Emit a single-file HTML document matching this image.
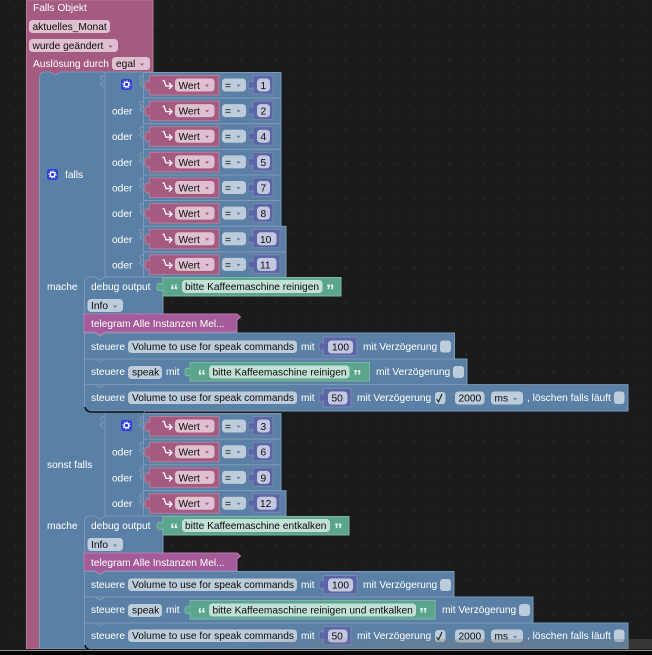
<!DOCTYPE html>
<html><head><meta charset="utf-8"><style>
html,body{margin:0;padding:0;background:#1b1b1b;width:652px;height:655px;overflow:hidden}
svg{display:block;filter:blur(.3px)}
text{font-family:"Liberation Sans",sans-serif;font-size:10.2px;fill:#fff}
.d{fill:#0c0c0c}
.q{font-weight:bold;font-size:17px;fill:#e4f3ee}
.fb{fill:#bdccdb}.fp{fill:#dfc0d0}.fu{fill:#c3c7e0}.fg{fill:#c3e0d6}
.e{fill:none;stroke:#7c99b7;stroke-width:1}
</style></head><body>
<svg width="652" height="655" viewBox="0 0 652 655" xmlns="http://www.w3.org/2000/svg">
<defs>
<linearGradient id="band" x1="0" x2="1" y1="0" y2="0"><stop offset=".3" stop-color="#777" stop-opacity="0"/><stop offset=".7" stop-color="#777" stop-opacity=".3"/></linearGradient>
<pattern id="dots" width="17.35" height="17.35" patternUnits="userSpaceOnUse"><rect x="15" y="7" width="1.2" height="1.2" fill="#3a3a3a"/></pattern>
<g id="gear"><rect width="11" height="11" rx="2.5" fill="#2f3fdc"/><circle cx="5.5" cy="5.5" r="2.4" fill="none" stroke="#fff" stroke-width="1.5"/><circle cx="5.5" cy="5.5" r="3.7" fill="none" stroke="#dfe3ff" stroke-width=".9" stroke-dasharray="1.2 1.7"/></g>
<g id="w">
<path d="M149.500 3.500H219V23H149.500V17.500C146 19.500 145 17.500 145 13.500S146 7.500 149.500 9.500Z" fill="#a55b80" stroke="#b77c99" stroke-width="1"/>
<path d="M162.500 8.500h1.500l2 5.500h6M169 11l3 3-3 3" fill="none" stroke="#fff" stroke-width="1.300"/>
<rect x="175" y="6.500" width="39.500" height="13" rx="3.500" class="fp"/><path d="M205 12.500h4l-2 2.500z" fill="#a55b80"/>
<rect x="222" y="6.500" width="24" height="13" rx="3.500" class="fb"/><path d="M236.500 12.500h4l-2 2.500z" fill="#5b80a5"/>
</g>
<g id="n1"><rect x="143.500" y=".5" width="137.500" height="25.600" fill="#5b80a5" stroke="#7c99b7"/><path d="M144 4C139 3 139 6 141 8S141 12 139.500 11 143 16 144 15" fill="none" stroke="#7c99b7"/>
<use href="#w"/>
<path d="M253 3.500H273V22H253V16C249 18 248 16 248 13S249 8 253 10Z" fill="#5b67a5" stroke="#7c85b7"/><rect x="257" y="6.500" width="13" height="13" rx="3.500" class="fu"/></g>
<g id="n2"><rect x="143.500" y=".5" width="142.500" height="25.600" fill="#5b80a5" stroke="#7c99b7"/><path d="M144 4C139 3 139 6 141 8S141 12 139.500 11 143 16 144 15" fill="none" stroke="#7c99b7"/>
<use href="#w"/>
<path d="M253 3.500H280V22H253V16C249 18 248 16 248 13S249 8 253 10Z" fill="#5b67a5" stroke="#7c85b7"/><rect x="257" y="6.500" width="19.500" height="13" rx="3.500" class="fu"/></g>
</defs>
<rect width="652" height="655" fill="#1b1b1b"/>
<rect width="652" height="655" fill="url(#dots)"/>

<!-- outer pink block -->
<path d="M26.500 0H153V72H70V76H39.500V649H26.500Z" fill="#a55b80" stroke="#b77c99"/>
<text x="33" y="11">Falls Objekt</text>
<rect x="29" y="20" width="81" height="13" rx="3.500" class="fp"/><text x="32.500" y="30" class="d">aktuelles_Monat</text>
<rect x="29" y="39" width="89" height="13" rx="3.500" class="fp"/><text x="32.500" y="49" class="d">wurde geändert</text><path d="M108.500 45.500h4l-2 2.500z" fill="#a55b80"/>
<text x="33" y="67">Auslösung durch</text>
<rect x="112" y="57" width="38" height="13" rx="3.500" class="fp"/><text x="116" y="67" class="d">egal</text><path d="M140 63.500h4l-2 2.500z" fill="#a55b80"/>
<rect x="27" y="60" width="0" height="0"/>

<!-- main blue body -->
<path d="M39.500 78Q39.500 72 45 72H50L55 75 60 72H144V516H105V649H39.500Z" fill="#5b80a5" stroke="#7c99b7"/>
<path d="M105 72V277M105 413V516" class="e"/>
<path d="M105 76C100 75 100 78 102 80S102 84 100 83 104 88 105 87" class="e"/>
<path d="M105 417C100 416 100 419 102 421S102 425 100 424 104 429 105 428" class="e"/>
<use href="#gear" x="47" y="169"/><text x="65" y="178">falls</text>
<text x="47" y="290">mache</text>
<text x="47" y="468">sonst falls</text>
<text x="47" y="529">mache</text>

<!-- section 1 rows -->
<g transform="translate(0,72)"><use href="#n1"/><use href="#gear" x="121" y="7"/><text x="178.500" y="17" class="d">Wert</text><text x="225" y="17" class="d">=</text><text x="260.500" y="17" class="d">1</text></g>
<g transform="translate(0,97.600)"><use href="#n1"/><text x="112" y="17">oder</text><text x="178.500" y="17" class="d">Wert</text><text x="225" y="17" class="d">=</text><text x="260.500" y="17" class="d">2</text></g>
<g transform="translate(0,123.200)"><use href="#n1"/><text x="112" y="17">oder</text><text x="178.500" y="17" class="d">Wert</text><text x="225" y="17" class="d">=</text><text x="260.500" y="17" class="d">4</text></g>
<g transform="translate(0,148.900)"><use href="#n1"/><text x="112" y="17">oder</text><text x="178.500" y="17" class="d">Wert</text><text x="225" y="17" class="d">=</text><text x="260.500" y="17" class="d">5</text></g>
<g transform="translate(0,174.500)"><use href="#n1"/><text x="112" y="17">oder</text><text x="178.500" y="17" class="d">Wert</text><text x="225" y="17" class="d">=</text><text x="260.500" y="17" class="d">7</text></g>
<g transform="translate(0,200.100)"><use href="#n1"/><text x="112" y="17">oder</text><text x="178.500" y="17" class="d">Wert</text><text x="225" y="17" class="d">=</text><text x="260.500" y="17" class="d">8</text></g>
<g transform="translate(0,225.800)"><use href="#n2"/><text x="112" y="17">oder</text><text x="178.500" y="17" class="d">Wert</text><text x="225" y="17" class="d">=</text><text x="260" y="17" class="d">10</text></g>
<g transform="translate(0,251.400)"><use href="#n2"/><text x="112" y="17">oder</text><text x="178.500" y="17" class="d">Wert</text><text x="225" y="17" class="d">=</text><text x="260" y="17" class="d">11</text></g>

<!-- mache 1 -->
<path d="M84.500 283Q84.500 277 90 277H95L100 280 105 277H163V314H84.500Z" fill="#5b80a5" stroke="#7c99b7"/>
<text x="91" y="290">debug output</text>
<path d="M163 277.500H341V296H163V290C158 292 157 290 157 287S158 282 163 284Z" fill="#5ba58c" stroke="#7cb7a3"/>
<text x="170" y="296" class="q">“</text><rect x="182" y="280" width="140.500" height="13" rx="3.500" class="fg"/><text x="185" y="290" class="d">bitte Kaffeemaschine reinigen</text><text x="326" y="296" class="q">”</text>
<rect x="87.500" y="299" width="35.500" height="13" rx="3.500" class="fb"/><text x="91" y="309" class="d">Info</text><path d="M113 305.500h4l-2 2.500z" fill="#5b80a5"/>
<path d="M84 314H237L240.500 317 237 320V332H105L100 335 95 332H84Z" fill="#a55b99" stroke="#b77cae"/>
<text x="91" y="327">telegram Alle Instanzen Mel...</text>

<g>
<path d="M84.500 333H95L100 336 105 333H454.500V359H84.500Z" fill="#5b80a5" stroke="#7c99b7"/>
<text x="91" y="350">steuere</text><rect x="128" y="340.500" width="169" height="12.500" rx="3.500" class="fb"/><text x="132" y="350" class="d">Volume to use for speak commands</text><text x="301" y="350">mit</text>
<path d="M323.500 337H357V355.500H323.500V350C319.500 352 319 350 319 346.500S319.500 341 323.500 343Z" fill="#5b67a5" stroke="#7c85b7"/><rect x="328" y="340.500" width="25" height="13" rx="3.500" class="fu"/><text x="332" y="350.500" class="d">100</text>
<text x="363" y="350">mit Verzögerung</text><rect x="440" y="340.500" width="11" height="12" rx="3" class="fb"/>
</g>
<g>
<path d="M84.500 359H95L100 362 105 359H467V384.600H84.500Z" fill="#5b80a5" stroke="#7c99b7"/>
<text x="91" y="375">steuere</text><rect x="128" y="366" width="34" height="13" rx="3.500" class="fb"/><text x="132" y="375.500" class="d">speak</text><text x="166" y="375">mit</text>
<path d="M190 362.500H369.500V381H190V375C186 377 185 375 185 372S186 367 190 369Z" fill="#5ba58c" stroke="#7cb7a3"/>
<text x="197.500" y="381.500" class="q">“</text><rect x="209" y="365.500" width="140.500" height="13" rx="3.500" class="fg"/><text x="212.500" y="375.500" class="d">bitte Kaffeemaschine reinigen</text><text x="353" y="381.500" class="q">”</text>
<text x="376" y="375">mit Verzögerung</text><rect x="453" y="366" width="11" height="12" rx="3" class="fb"/>
</g>
<g>
<path d="M84.500 384.600H95L100 387.600 105 384.600H628V411H90Q84.500 411 84.500 405Z" fill="#5b80a5" stroke="#7c99b7"/>
<path d="M85 407Q86 412 92 412H144" stroke="#0c0c0c" stroke-width="1.500" fill="none"/>
<text x="91" y="401">steuere</text><rect x="128" y="391.500" width="169" height="12.500" rx="3.500" class="fb"/><text x="132" y="401" class="d">Volume to use for speak commands</text><text x="301" y="401">mit</text>
<path d="M323.500 388.500H351V407H323.500V401C319.500 403 319 401 319 398S319.500 392 323.500 394Z" fill="#5b67a5" stroke="#7c85b7"/><rect x="328" y="391.500" width="19.500" height="13" rx="3.500" class="fu"/><text x="331.500" y="401.500" class="d">50</text>
<text x="357" y="401">mit Verzögerung</text><rect x="435" y="392" width="10.500" height="12" rx="3" class="fb"/><path d="M436.500 399l2 3 3.500-8" fill="none" stroke="#111" stroke-width="1"/>
<rect x="455" y="391.500" width="29.500" height="13" rx="3.500" class="fb"/><text x="458.500" y="401.500" class="d">2000</text>
<rect x="491" y="391.500" width="32" height="13" rx="3.500" class="fb"/><text x="494.500" y="401.500" class="d">ms</text><path d="M513 398h4l-2 2.500z" fill="#5b80a5"/>
<text x="527" y="401">, löschen falls läuft</text><rect x="614" y="391.500" width="10.500" height="12.500" rx="3" class="fb"/>
</g>

<!-- section 2 rows -->
<g transform="translate(0,413)"><use href="#n1"/><use href="#gear" x="121" y="7"/><text x="178.500" y="17" class="d">Wert</text><text x="225" y="17" class="d">=</text><text x="260.500" y="17" class="d">3</text></g>
<g transform="translate(0,438.700)"><use href="#n1"/><text x="112" y="17">oder</text><text x="178.500" y="17" class="d">Wert</text><text x="225" y="17" class="d">=</text><text x="260.500" y="17" class="d">6</text></g>
<g transform="translate(0,464.400)"><use href="#n1"/><text x="112" y="17">oder</text><text x="178.500" y="17" class="d">Wert</text><text x="225" y="17" class="d">=</text><text x="260.500" y="17" class="d">9</text></g>
<g transform="translate(0,490.200)"><use href="#n2"/><text x="112" y="17">oder</text><text x="178.500" y="17" class="d">Wert</text><text x="225" y="17" class="d">=</text><text x="260" y="17" class="d">12</text></g>

<!-- mache 2 -->
<path d="M84.500 522Q84.500 516 90 516H95L100 519 105 516H163V553H84.500Z" fill="#5b80a5" stroke="#7c99b7"/>
<text x="91" y="529">debug output</text>
<path d="M163 516.500H349V535H163V529C158 531 157 529 157 526S158 521 163 523Z" fill="#5ba58c" stroke="#7cb7a3"/>
<text x="170" y="535" class="q">“</text><rect x="182" y="519" width="148" height="13" rx="3.500" class="fg"/><text x="185" y="529" class="d">bitte Kaffeemaschine entkalken</text><text x="334" y="535" class="q">”</text>
<rect x="87.500" y="538" width="35.500" height="13" rx="3.500" class="fb"/><text x="91" y="548" class="d">Info</text><path d="M113 544.500h4l-2 2.500z" fill="#5b80a5"/>
<path d="M84 553H237L240.500 556 237 559V571H105L100 574 95 571H84Z" fill="#a55b99" stroke="#b77cae"/>
<text x="91" y="566">telegram Alle Instanzen Mel...</text>

<g>
<path d="M84.500 571.500H95L100 574.500 105 571.500H454V597H84.500Z" fill="#5b80a5" stroke="#7c99b7"/>
<text x="91" y="588">steuere</text><rect x="128" y="578.500" width="169" height="12.500" rx="3.500" class="fb"/><text x="132" y="588" class="d">Volume to use for speak commands</text><text x="301" y="588">mit</text>
<path d="M323.500 575.500H357V594H323.500V588C319.500 590 319 588 319 585S319.500 579 323.500 581Z" fill="#5b67a5" stroke="#7c85b7"/><rect x="328" y="578.500" width="25" height="13" rx="3.500" class="fu"/><text x="332" y="588.500" class="d">100</text>
<text x="363" y="588">mit Verzögerung</text><rect x="440" y="579" width="11" height="12" rx="3" class="fb"/>
</g>
<g>
<path d="M84.500 597H95L100 600 105 597H533V623H84.500Z" fill="#5b80a5" stroke="#7c99b7"/>
<text x="91" y="613">steuere</text><rect x="128" y="604" width="34" height="13" rx="3.500" class="fb"/><text x="132" y="613.500" class="d">speak</text><text x="166" y="613">mit</text>
<path d="M190 600.500H435V619H190V613C186 615 185 613 185 610S186 605 190 607Z" fill="#5ba58c" stroke="#7cb7a3"/>
<text x="197.500" y="619.500" class="q">“</text><rect x="209" y="603.500" width="207" height="13" rx="3.500" class="fg"/><text x="212.500" y="613.500" class="d">bitte Kaffeemaschine reinigen und entkalken</text><text x="419" y="619.500" class="q">”</text>
<text x="442" y="613">mit Verzögerung</text><rect x="519" y="604" width="11" height="12" rx="3" class="fb"/>
</g>
<g>
<path d="M84.500 623H95L100 626 105 623H628V649H90Q84.500 649 84.500 643Z" fill="#5b80a5" stroke="#7c99b7"/>
<path d="M85 645Q86 650 92 650H99" stroke="#0c0c0c" stroke-width="1.500" fill="none"/>
<text x="91" y="639">steuere</text><rect x="128" y="629.500" width="169" height="12.500" rx="3.500" class="fb"/><text x="132" y="639" class="d">Volume to use for speak commands</text><text x="301" y="639">mit</text>
<path d="M323.500 626.500H351V645H323.500V639C319.500 641 319 639 319 636S319.500 630 323.500 632Z" fill="#5b67a5" stroke="#7c85b7"/><rect x="328" y="629.500" width="19.500" height="13" rx="3.500" class="fu"/><text x="331.500" y="639.500" class="d">50</text>
<text x="357" y="639">mit Verzögerung</text><rect x="435" y="630" width="10.500" height="12" rx="3" class="fb"/><path d="M436.500 637l2 3 3.500-8" fill="none" stroke="#111" stroke-width="1"/>
<rect x="455" y="629.500" width="29.500" height="13" rx="3.500" class="fb"/><text x="458.500" y="639.500" class="d">2000</text>
<rect x="491" y="629.500" width="32" height="13" rx="3.500" class="fb"/><text x="494.500" y="639.500" class="d">ms</text><path d="M513 636h4l-2 2.500z" fill="#5b80a5"/>
<text x="527" y="639">, löschen falls läuft</text><rect x="614" y="629.500" width="10.500" height="12.500" rx="3" class="fb"/>
</g>

<!-- bottom scrollbar band -->
<rect x="0" y="639" width="652" height="10" fill="url(#band)"/>
<rect x="0" y="649" width="652" height="1" fill="#1b1b1b"/>
<rect x="0" y="650" width="652" height="1" fill="#999"/>
<rect x="0" y="651" width="652" height="4" fill="#050505"/>
</svg>
</body></html>
